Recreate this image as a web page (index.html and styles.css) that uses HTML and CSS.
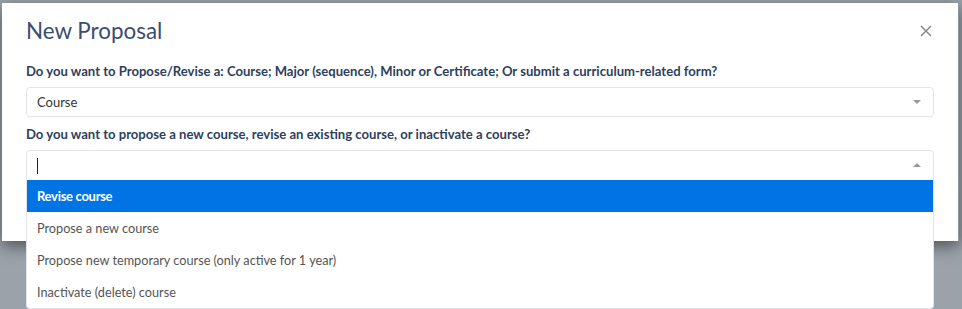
FILE: index.html
```html
<!DOCTYPE html>
<html lang="en">
<head>
  <meta charset="UTF-8">
  <meta name="viewport" content="width=device-width, initial-scale=1.0">
  <title>New Proposal</title>
  <link rel="stylesheet" href="styles.css">
</head>
<body>
  <div class="modal">
    <div class="modal-header">
      <h2 class="modal-title">New Proposal</h2>
      <span class="close">
        <svg width="12" height="12" viewBox="0 0 12 12"><path d="M1 1L11 11M11 1L1 11" stroke="#8a8a8a" stroke-width="1.5" fill="none"/></svg>
      </span>
    </div>
    <div class="modal-body">
      <label class="question">Do you want to Propose/Revise a: Course; Major (sequence), Minor or Certificate; Or submit a curriculum-related form?</label>
      <div class="select">
        <span class="value">Course</span>
        <span class="arrow down"></span>
      </div>
      <label class="question">Do you want to propose a new course, revise an existing course, or inactivate a course?</label>
      <div class="select open">
        <span class="caret"></span>
        <span class="arrow up"></span>
        <ul class="options">
          <li class="active">Revise course</li>
          <li>Propose a new course</li>
          <li>Propose new temporary course (only active for 1 year)</li>
          <li>Inactivate (delete) course</li>
        </ul>
      </div>
    </div>
  </div>
</body>
</html>
```

FILE: styles.css
```css
body {
  margin: 0;
  background-color: #9ba2aa;
  font-family: Lato, "Open Sans", sans-serif;
  height: 309px;
  overflow: hidden;
}
.modal {
  margin: 3px 3px 0 2px;
  height: 238px;
  background-color: #fff;
  border-right: 1px solid #8f949a;
  box-shadow: 0 5px 15px rgba(0, 0, 0, 0.5);
  box-sizing: border-box;
}
.modal-header {
  display: flex;
  justify-content: space-between;
  align-items: center;
  padding: 14px 26px 0 24px;
  height: 40px;
  box-sizing: border-box;
}
.modal-title {
  margin: 0;
  font-size: 22.4px;
  font-weight: 400;
  color: #3a4d72;
}
.close {
  display: flex;
  margin-top: 2px;
}
.modal-body {
  padding: 19px 24px 0 24px;
}
.question {
  display: block;
  font-size: 13.1px;
  font-weight: 700;
  color: #2e3f5e;
  line-height: 18px;
  margin-bottom: 7px;
}
.select {
  position: relative;
  height: 28px;
  border: 1px solid #e1e4e8;
  border-radius: 4px;
  margin-bottom: 8px;
  display: flex;
  align-items: center;
  padding: 0 10px;
  font-size: 13px;
  color: #333;
}
.select.open {
  height: 29px;
  border-radius: 4px 4px 0 0;
}
.caret {
  display: block;
  width: 1px;
  height: 16px;
  background-color: #222;
}
.arrow {
  position: absolute;
  right: 12px;
  width: 0;
  height: 0;
  border-left: 4px solid transparent;
  border-right: 4px solid transparent;
}
.arrow.down {
  top: 12px;
  border-top: 4px solid #999;
}
.arrow.up {
  top: 12px;
  border-bottom: 4px solid #999;
}
.options {
  position: absolute;
  top: 29px;
  left: -1px;
  right: -1px;
  margin: 0;
  padding: 0;
  list-style: none;
  background-color: #fff;
  border: 1px solid #e1e4e8;
  border-top: none;
  border-radius: 0 0 4px 4px;
}
.options li {
  height: 32px;
  line-height: 32px;
  padding: 0 10px;
  font-size: 12.7px;
  color: #555;
}
.options li.active {
  background-color: #0074e4;
  color: #fff;
  font-weight: 700;
  font-size: 13px;
  letter-spacing: -0.3px;
}
```
